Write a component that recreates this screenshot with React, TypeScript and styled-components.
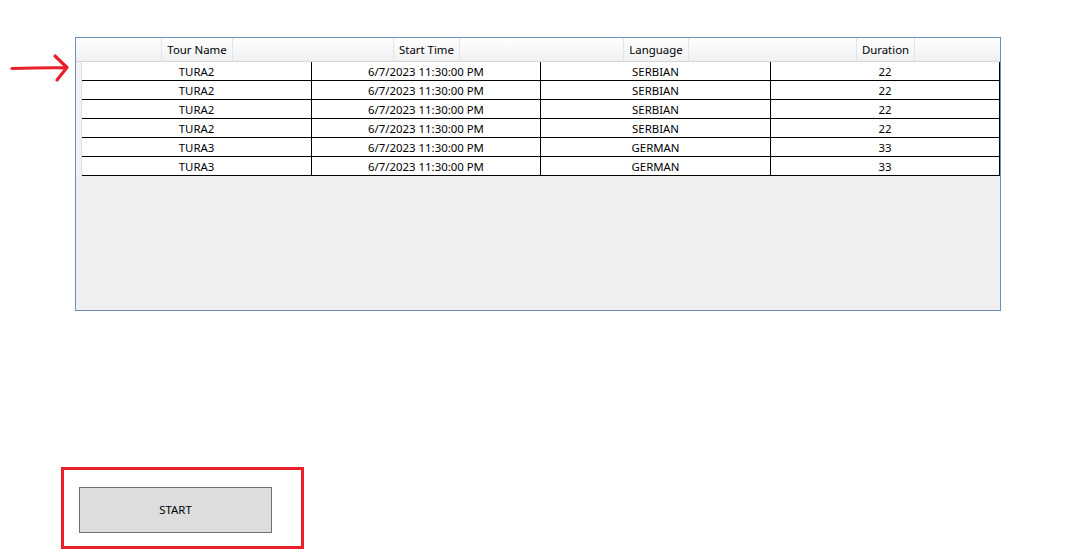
import React from "react";
import styled, { createGlobalStyle } from "styled-components";

const Global = createGlobalStyle`
  html, body { margin: 0; padding: 0; background: #ffffff; }
  body { font-family: "Segoe UI", "Noto Sans", "Open Sans", sans-serif; font-size: 11.4px; color: #000; }
`;

const Page = styled.div`
  position: relative;
  width: 1080px;
  height: 555px;
  padding-top: 37px;
  box-sizing: border-box;
`;

const Arrow = styled.svg`
  position: absolute;
  left: 8px;
  top: 52px;
`;

const Grid = styled.div`
  margin-left: 75px;
  width: 926px;
  height: 274px;
  box-sizing: border-box;
  border: 1px solid #6b8fba;
  background: #efefef;
  display: flex;
  flex-direction: column;
`;

const HeaderRow = styled.div`
  display: flex;
  height: 24px;
  box-sizing: border-box;
  border-bottom: 1px solid #d5d5d5;
  background: linear-gradient(#ffffff, #eff0f2);
`;

const Corner = styled.div`
  width: 6px;
  flex: none;
`;

const HeaderCell = styled.div<{ $w: number }>`
  width: ${(p) => p.$w}px;
  flex: none;
  display: flex;
  justify-content: center;
  align-items: stretch;
`;

const HeaderLabel = styled.div`
  display: flex;
  align-items: center;
  padding: 1px 5px 0;
  border-left: 1px solid #e3e4e6;
  border-right: 1px solid #e3e4e6;
  line-height: 1;
`;

const Row = styled.div`
  display: flex;
  height: 19px;
`;

const RowHeader = styled.div`
  width: 6px;
  flex: none;
  background: #f3f3f3;
  box-sizing: border-box;
  border-right: 1px solid #dcdcdc;
`;

const Cell = styled.div<{ $w: number }>`
  width: ${(p) => p.$w}px;
  flex: none;
  box-sizing: border-box;
  background: #ffffff;
  border-right: 1px solid #000;
  border-bottom: 1px solid #000;
  display: flex;
  align-items: center;
  justify-content: center;
  line-height: 1;
  padding-top: 1px;
`;

const Highlight = styled.div`
  margin-top: 156px;
  margin-left: 61px;
  width: 243px;
  height: 82px;
  box-sizing: border-box;
  border: 3px solid #e8202a;
  padding: 17px 0 0 15px;
`;

const Button = styled.button`
  width: 193px;
  height: 46px;
  box-sizing: border-box;
  background: #dddddd;
  border: 1px solid #707070;
  font-family: inherit;
  font-size: 11.4px;
  color: #000;
  padding: 0 0 2px;
`;

const widths = [230, 229, 230, 229];
const headers = ["Tour Name", "Start Time", "Language", "Duration"];
const rows = [
  ["TURA2", "6/7/2023 11:30:00 PM", "SERBIAN", "22"],
  ["TURA2", "6/7/2023 11:30:00 PM", "SERBIAN", "22"],
  ["TURA2", "6/7/2023 11:30:00 PM", "SERBIAN", "22"],
  ["TURA2", "6/7/2023 11:30:00 PM", "SERBIAN", "22"],
  ["TURA3", "6/7/2023 11:30:00 PM", "GERMAN", "33"],
  ["TURA3", "6/7/2023 11:30:00 PM", "GERMAN", "33"],
];

export default function App() {
  return (
    <Page>
      <Global />
      <Arrow width="64" height="32" viewBox="0 0 64 32">
        <path d="M4 16.5 Q30 15.6 58 15.8" stroke="#e8202a" strokeWidth="3.2" fill="none" strokeLinecap="round" />
        <path d="M47 4 L59 15.5 L49 28" stroke="#e8202a" strokeWidth="3.2" fill="none" strokeLinecap="round" strokeLinejoin="round" />
      </Arrow>
      <Grid>
        <HeaderRow>
          <Corner />
          {headers.map((h, i) => (
            <HeaderCell key={h} $w={widths[i]}>
              <HeaderLabel>{h}</HeaderLabel>
            </HeaderCell>
          ))}
        </HeaderRow>
        {rows.map((r, ri) => (
          <Row key={ri}>
            <RowHeader />
            {r.map((c, ci) => (
              <Cell key={ci} $w={widths[ci]}>{c}</Cell>
            ))}
          </Row>
        ))}
      </Grid>
      <Highlight>
        <Button>START</Button>
      </Highlight>
    </Page>
  );
}
